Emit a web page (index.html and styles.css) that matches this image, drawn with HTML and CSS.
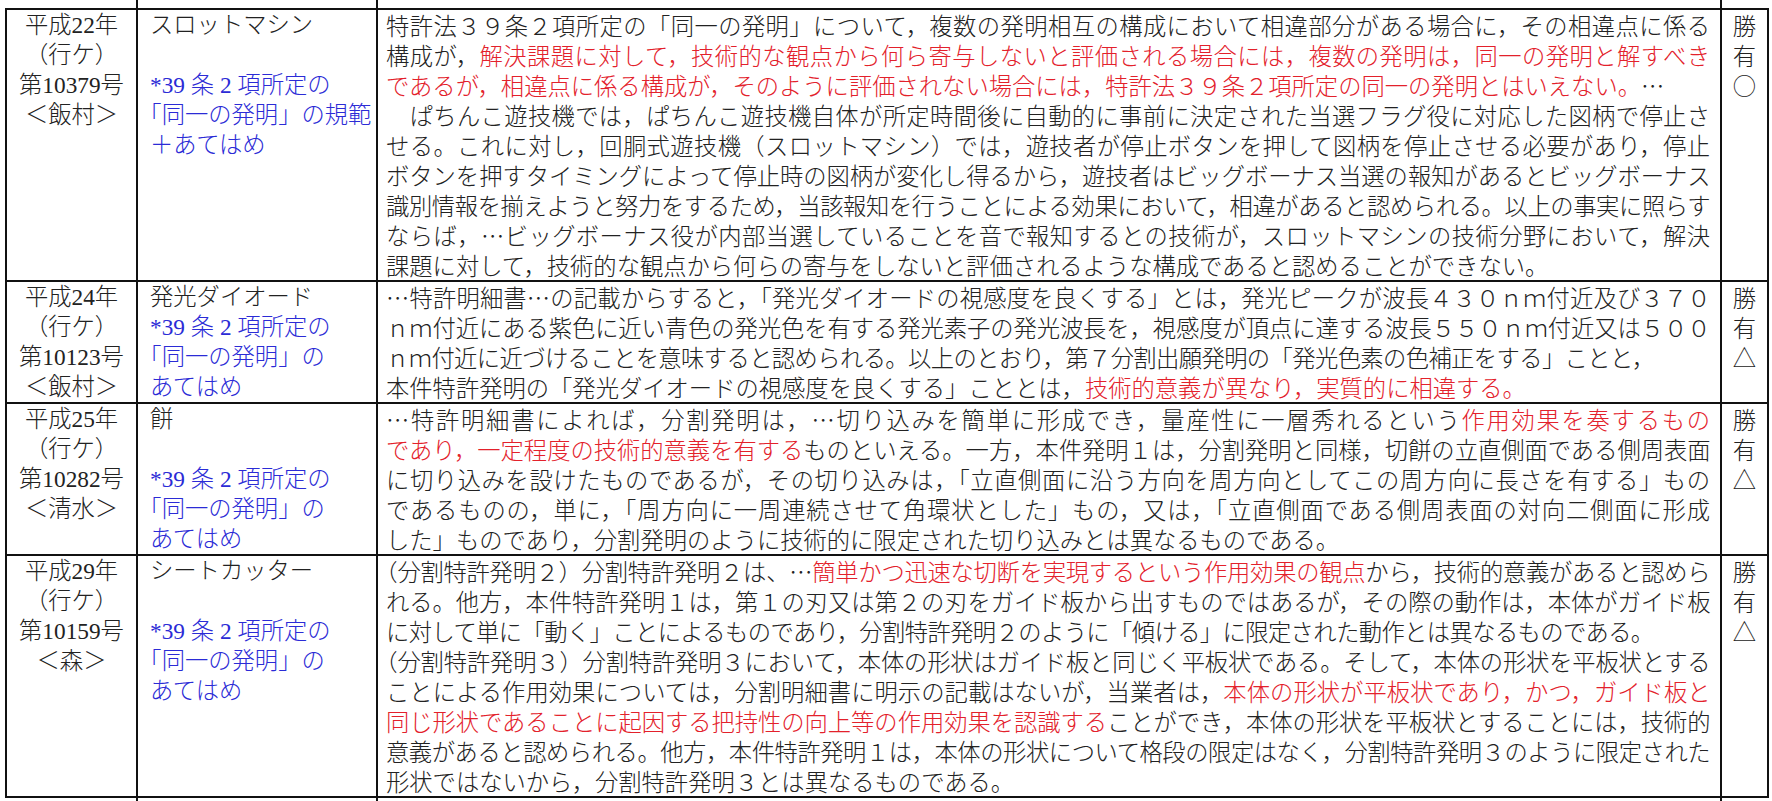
FILE: index.html
```html
<!DOCTYPE html>
<html lang="ja">
<head>
<meta charset="utf-8">
<title>同一の発明 裁判例</title>
<link rel="stylesheet" href="styles.css">
</head>
<body>
<table class="cases">
  <colgroup>
    <col class="c-no">
    <col class="c-name">
    <col class="c-body">
    <col class="c-res">
  </colgroup>
  <tbody>
    <tr class="cut cut-top"><td></td><td></td><td></td><td></td></tr>
    <tr>
      <td class="no">平成22年<br>（行ケ）<br>第10379号<br>＜飯村＞</td>
      <td class="name">スロットマシン<br><br><span class="note">*39 条 2 項所定の<br>「同一の発明」の規範<br>＋あてはめ</span></td>
      <td class="body">
        <span class="ln">特許法３９条２項所定の「同一の発明」について，複数の発明相互の構成において相違部分がある場合に，その相違点に係る</span>
        <span class="ln">構成が，<span class="hl">解決課題に対して，技術的な観点から何ら寄与しないと評価される場合には，複数の発明は，同一の発明と解すべき</span></span>
        <span class="ln end"><span class="hl">であるが，相違点に係る構成が，そのように評価されない場合には，特許法３９条２項所定の同一の発明とはいえない。</span>…</span>
        <span class="ln">　ぱちんこ遊技機では，ぱちんこ遊技機自体が所定時間後に自動的に事前に決定された当選フラグ役に対応した図柄で停止さ</span>
        <span class="ln">せる。これに対し，回胴式遊技機（スロットマシン）では，遊技者が停止ボタンを押して図柄を停止させる必要があり，停止</span>
        <span class="ln sq">ボタンを押すタイミングによって停止時の図柄が変化し得るから，遊技者はビッグボーナス当選の報知があるとビッグボーナス</span>
        <span class="ln sq">識別情報を揃えようと努力をするため，当該報知を行うことによる効果において，相違があると認められる。以上の事実に照らす</span>
        <span class="ln">ならば，…ビッグボーナス役が内部当選していることを音で報知するとの技術が，スロットマシンの技術分野において，解決</span>
        <span class="ln end">課題に対して，技術的な観点から何らの寄与をしないと評価されるような構成であると認めることができない。</span>
      </td>
      <td class="res">勝<br>有<br>○</td>
    </tr>
    <tr>
      <td class="no">平成24年<br>（行ケ）<br>第10123号<br>＜飯村＞</td>
      <td class="name">発光ダイオード<br><span class="note">*39 条 2 項所定の<br>「同一の発明」の<br>あてはめ</span></td>
      <td class="body">
        <span class="ln sq">…特許明細書…の記載からすると，「発光ダイオードの視感度を良くする」とは，発光ピークが波長４３０ｎｍ付近及び３７０</span>
        <span class="ln sq">ｎｍ付近にある紫色に近い青色の発光色を有する発光素子の発光波長を，視感度が頂点に達する波長５５０ｎｍ付近又は５００</span>
        <span class="ln end sq">ｎｍ付近に近づけることを意味すると認められる。以上のとおり，第７分割出願発明の「発光色素の色補正をする」ことと，</span>
        <span class="ln end">本件特許発明の「発光ダイオードの視感度を良くする」こととは，<span class="hl">技術的意義が異なり，実質的に相違する。</span></span>
      </td>
      <td class="res">勝<br>有<br>△</td>
    </tr>
    <tr>
      <td class="no">平成25年<br>（行ケ）<br>第10282号<br>＜清水＞</td>
      <td class="name">餅<br><br><span class="note">*39 条 2 項所定の<br>「同一の発明」の<br>あてはめ</span></td>
      <td class="body">
        <span class="ln">…特許明細書によれば，分割発明は，…切り込みを簡単に形成でき，量産性に一層秀れるという<span class="hl">作用効果を奏するもの</span></span>
        <span class="ln sq"><span class="hl">であり，一定程度の技術的意義を有する</span>ものといえる。一方，本件発明１は，分割発明と同様，切餅の立直側面である側周表面</span>
        <span class="ln">に切り込みを設けたものであるが，その切り込みは，「立直側面に沿う方向を周方向としてこの周方向に長さを有する」もの</span>
        <span class="ln">であるものの，単に，「周方向に一周連続させて角環状とした」もの，又は，「立直側面である側周表面の対向二側面に形成</span>
        <span class="ln end">した」ものであり，分割発明のように技術的に限定された切り込みとは異なるものである。</span>
      </td>
      <td class="res">勝<br>有<br>△</td>
    </tr>
    <tr>
      <td class="no">平成29年<br>（行ケ）<br>第10159号<br>＜森＞</td>
      <td class="name">シートカッター<br><br><span class="note">*39 条 2 項所定の<br>「同一の発明」の<br>あてはめ</span></td>
      <td class="body">
        <span class="ln sq">（分割特許発明２）分割特許発明２は、…<span class="hl">簡単かつ迅速な切断を実現するという作用効果の観点</span>から，技術的意義があると認めら</span>
        <span class="ln sq">れる。他方，本件特許発明１は，第１の刃又は第２の刃をガイド板から出すものではあるが，その際の動作は，本体がガイド板</span>
        <span class="ln end sq">に対して単に「動く」ことによるものであり，分割特許発明２のように「傾ける」に限定された動作とは異なるものである。</span>
        <span class="ln sq">（分割特許発明３）分割特許発明３において，本体の形状はガイド板と同じく平板状である。そして，本体の形状を平板状とする</span>
        <span class="ln sq">ことによる作用効果については，分割明細書に明示の記載はないが，当業者は，<span class="hl">本体の形状が平板状であり，かつ，ガイド板と</span></span>
        <span class="ln sq"><span class="hl">同じ形状であることに起因する把持性の向上等の作用効果を認識する</span>ことができ，本体の形状を平板状とすることには，技術的</span>
        <span class="ln sq">意義があると認められる。他方，本件特許発明１は，本体の形状について格段の限定はなく，分割特許発明３のように限定された</span>
        <span class="ln end">形状ではないから，分割特許発明３とは異なるものである。</span>
      </td>
      <td class="res">勝<br>有<br>△</td>
    </tr>
    <tr class="cut cut-bot"><td></td><td></td><td></td><td></td></tr>
  </tbody>
</table>
</body>
</html>
```

FILE: styles.css
```css
html, body {
  margin: 0;
  padding: 0;
  background: #ffffff;
}

.cases {
  border-collapse: collapse;
  table-layout: fixed;
  width: 1764px;
  margin-left: 5px;
  color: #222222;
  font-family: "Liberation Serif", "Noto Sans CJK JP", serif;
  font-size: 23.3px;
  font-weight: 300;
  line-height: 30px;
}

.c-no { width: 131px; }
.c-name { width: 240px; }
.c-body { width: 1344px; }
.c-res { width: 47px; }

.cases td {
  border: 2px solid #111111;
  padding: 0;
  vertical-align: top;
}

.cut td {
  border-top: none;
  border-bottom: none;
  font-size: 0;
  line-height: 0;
}
.cut td:first-child { border-left: none; }
.cut td:last-child { border-right: none; }
.cut-top td { height: 8px; }
.cut-bot td { height: 3px; }

.no {
  text-align: center;
}

.name {
  padding-left: 12px !important;
  text-spacing-trim: trim-start;
}

.body {
  padding: 0 10px 0 8px !important;
  font-family: "Noto Sans CJK JP", sans-serif;
  text-spacing-trim: trim-start;
}

.ln {
  display: block;
  text-align: justify;
  text-align-last: justify;
}
.ln.end {
  text-align-last: start;
}
.ln.sq {
  letter-spacing: -0.6px;
}

.res {
  text-align: center;
  font-family: "Noto Sans CJK JP", sans-serif;
}

.hl { color: #e3212b; }
.note { color: #2b2bd6; }
```
